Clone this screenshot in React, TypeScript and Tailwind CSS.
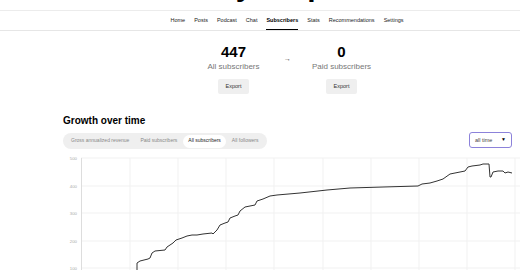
import React from "react";

const navItems = [
  "Home",
  "Posts",
  "Podcast",
  "Chat",
  "Subscribers",
  "Stats",
  "Recommendations",
  "Settings",
];

const tabs = [
  "Gross annualized revenue",
  "Paid subscribers",
  "All subscribers",
  "All followers",
];

// growth line, page coordinates
const points: [number, number][] = [
  [82, 300], [136, 300], [137, 272], [137, 265], [140, 263], [148, 261],
  [150, 260], [152, 255], [155, 253], [165, 252], [167, 249], [170, 247],
  [173, 245], [176, 242], [182, 240], [187, 238], [192, 237], [197, 237],
  [203, 236], [212, 235], [213, 236], [217, 232], [220, 227], [225, 225],
  [228, 224], [230, 220], [235, 218], [238, 217], [240, 213], [245, 209],
  [250, 208], [255, 207], [257, 203], [263, 201], [270, 198], [277, 197],
  [300, 195], [327, 192], [350, 190], [383, 189], [418, 188], [422, 186],
  [430, 185], [437, 183], [443, 181], [450, 176], [460, 174], [465, 173],
  [468, 169], [472, 168], [480, 167], [483, 166], [489, 166], [490, 179],
  [491, 179], [493, 174], [498, 173], [503, 173], [505, 175], [508, 174],
  [512, 175],
];

const yTicks = [
  { label: "500", y: 160 },
  { label: "400", y: 188 },
  { label: "300", y: 215 },
  { label: "200", y: 243 },
  { label: "100", y: 270 },
];

const xGrid = [130, 178, 226, 274, 323, 371, 419, 467, 515];

const StatBlock = ({ value, label }: { value: string; label: string }) => (
  <div className="flex w-[80px] flex-col items-center">
    <div className="text-[15px] leading-[15px] font-extrabold text-black">
      {value}
    </div>
    <div className="mt-[3px] text-[8px] leading-[10px] whitespace-nowrap text-[#777]">
      {label}
    </div>
    <button className="mt-[7px] flex h-[15px] w-[31px] items-center justify-center rounded-[2px] bg-[#efefef] text-[5.5px] text-[#333]">
      Export
    </button>
  </div>
);

const GrowthChart = () => {
  const d = points.map((p, i) => `${i ? "L" : "M"}${p[0]} ${p[1]}`).join(" ");
  return (
    <svg
      width={520}
      height={119}
      viewBox="0 153 520 119"
      className="mt-[2px] block"
    >
      {yTicks.map((t) => (
        <g key={t.label}>
          <line x1={81} x2={520} y1={t.y} y2={t.y} stroke="#f1f1f1" strokeWidth={1} />
          <text
            x={77}
            y={t.y + 1.5}
            textAnchor="end"
            fontSize={4.3}
            fill="#aaa"
            fontFamily="Liberation Sans, sans-serif"
          >
            {t.label}
          </text>
        </g>
      ))}
      {xGrid.map((x) => (
        <line key={x} x1={x} x2={x} y1={160} y2={272} stroke="#f1f1f1" strokeWidth={1} />
      ))}
      <line x1={81.5} x2={81.5} y1={160} y2={272} stroke="#ddd" strokeWidth={1} />
      <path d={d} fill="none" stroke="#333" strokeWidth={1} strokeLinejoin="round" />
    </svg>
  );
};

export default function App() {
  return (
    <div
      className="h-[272px] w-[520px] overflow-hidden bg-white text-[#333]"
      style={{ fontFamily: '"Liberation Sans", Arial, sans-serif' }}
    >
      <div className="h-[11px] overflow-hidden border-b border-[#ececec]">
        <div className="-mt-[29px] w-[568px] text-center text-[30px] leading-[30px] font-bold text-black">
          Daily Dispatch
        </div>
      </div>

      <nav className="flex h-[20px] w-[574px] items-start justify-center gap-[9px] border-b border-[#e6e6e6] text-[5.5px]">
        {navItems.map((n) => (
          <div
            key={n}
            className={
              n === "Subscribers"
                ? "flex h-[19px] items-center border-b border-black font-bold text-black"
                : "flex h-[18px] items-center text-[#222]"
            }
          >
            {n}
          </div>
        ))}
      </nav>

      <div className="ml-[63px] w-[449px]">
        <div className="mt-[13px] flex items-start justify-center">
          <StatBlock value="447" label="All subscribers" />
          <div className="flex w-[28px] justify-center pt-[10px] text-[7px] font-bold text-[#444]">
            →
          </div>
          <StatBlock value="0" label="Paid subscribers" />
        </div>

        <h2 className="mt-[22px] text-[10px] leading-[10px] font-extrabold text-black">
          Growth over time
        </h2>

        <div className="mt-[7px] flex items-start justify-between">
          <div className="flex h-[16px] items-center gap-[1px] rounded-full bg-[#efefef] px-[3px] text-[5px] text-[#888]">
            {tabs.map((t) => (
              <div
                key={t}
                className={
                  t === "All subscribers"
                    ? "flex h-[13px] items-center rounded-full bg-white px-[5px] text-[#222]"
                    : "flex h-[13px] items-center px-[5px]"
                }
              >
                {t}
              </div>
            ))}
          </div>
          <div className="-mt-[1px] flex h-[16px] w-[43px] items-center justify-between rounded-[3px] border border-[#8c82da] pr-[5px] pl-[5px] text-[5.5px] text-[#444]">
            <span>all time</span>
            <span className="text-[5px] text-black">▼</span>
          </div>
        </div>
      </div>

      <GrowthChart />
    </div>
  );
}
